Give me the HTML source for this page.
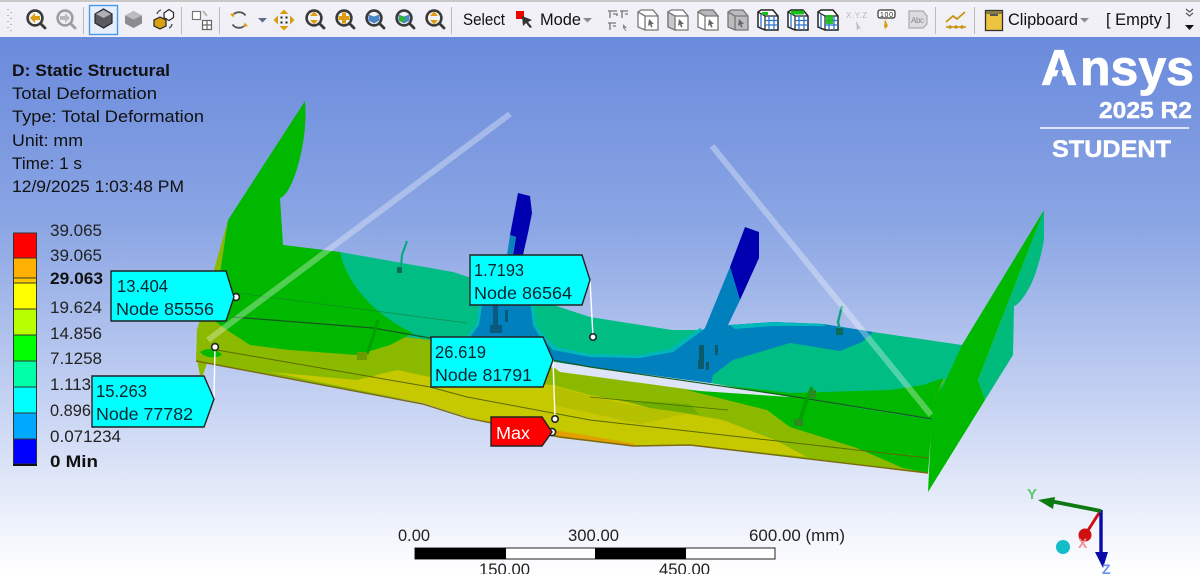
<!DOCTYPE html>
<html><head><meta charset="utf-8"><style>
html,body{margin:0;padding:0;width:1200px;height:574px;overflow:hidden;background:#fff}
svg{display:block;filter:blur(.35px)}
text{font-family:"Liberation Sans",sans-serif}
</style></head><body>
<svg width="1200" height="574" viewBox="0 0 1200 574" xmlns="http://www.w3.org/2000/svg">
<defs>
<linearGradient id="bg" gradientUnits="userSpaceOnUse" x1="0" y1="37" x2="0" y2="574">
<stop offset="0" stop-color="#6a8adc"/><stop offset=".35" stop-color="#8ba6e4"/><stop offset=".65" stop-color="#c0cef1"/><stop offset="1" stop-color="#ffffff"/></linearGradient>
<linearGradient id="tb" x1="0" y1="0" x2="0" y2="1"><stop offset="0" stop-color="#f2f2f8"/><stop offset="1" stop-color="#eeeef4"/></linearGradient>
<g id="mag"><circle cx="0" cy="0" r="7.4" fill="#f4f4f4" stroke="#3a3a3a" stroke-width="2.6"/><path d="M5.500 5.500L10 10" stroke="#3a3a3a" stroke-width="2.8" stroke-linecap="round"/></g>
<g id="cur"><path d="M1-1L6 4L3.500 4L4.500 7L3 7.500L2 4.500L0 6Z" fill="#666"/></g>
<g id="grid"><path d="M-7-10H5L10-4V10H-3L-10 7V-8Z" fill="#fff" stroke="#222" stroke-width="1.500"/><path d="M-3-4V10M-3-4H10M-3-4L-10-8" fill="none" stroke="#222" stroke-width="1.200"/><path d="M1-4V10M6-4V10M-3 0.500H10M-3 5H10M-7-6V8" fill="none" stroke="#2a74d0" stroke-width="1.300"/></g>
</defs>

<rect x="0" y="37" width="1200" height="537" fill="url(#bg)"/>

<!-- base lime: fin strip + lower plate -->
<path d="M228,220L197,330L196,361L423,403L467,417L560,437L633,446L690,445L928,473L932,420L790,397L590,376L430,340L216,300Z" fill="#8ab900"/>
<polygon points="197,360 207,363 203,375 200,375" fill="#8ab900"/>

<!-- right fin back -->
<path d="M1044,210L1044,240C1040,262 1034,280 1028,290C1022,300 1018,305 1014,306L1013,355L985,400L978,380Z" fill="#00bb7c"/>

<!-- upper plate teal -->
<path d="M283,245L340,252L453,272L590,317L672,330L703,330L730,325L773,322L823,324L873,332L962,345L932,420L790,397L710,383L590,368L430,340L267,320Z" fill="#00bd84"/>

<!-- main green: fin + left of plate -->
<path d="M305,101C307,125 303,150 296,172C291,187 285,197 280,198L283,245L340,252C347,285 375,315 413,333L390,345L357,355L290,350L250,345L227,330L213,320L228,220Z" fill="#00b800"/>
<path d="M200,352C207,347 218,349 222,355C215,359 205,358 200,352Z" fill="#00b800"/>

<!-- right green strip of upper plate -->
<path d="M713,384L790,393L890,390L923,385L943,378L935,420L790,397Z" fill="#00b800"/>
<polygon points="880,412 932,420 932,427 900,420" fill="#00c0a0"/>

<!-- blue zones -->
<path d="M466,337L476,325L480,300L533,300L536,325L543,335L556,347L590,354L640,355L670,349L700,328L703,330L676,352L640,358L590,357L553,350L540,337L533,325L530,300L483,300L479,325L470,337Z" fill="#00b8bc"/>
<path d="M470,337L479,325L483,300L530,300L533,325L540,337L553,350L590,357L640,358L673,352L703,330L730,325L773,322L823,324L873,332L862,342L840,351L790,343L733,360L713,375L711,384L590,368L500,351Z" fill="#0080bd"/>
<path d="M730,325L773,322L823,324L826,326L773,326L735,329Z" fill="#00b8bc"/>

<!-- lower plate zones -->
<path d="M687,390L767,410L790,427L857,448L903,468L928,473L932,420L790,397Z" fill="#00b800"/>
<path d="M270,372L357,380L397,370L430,377L553,385L590,395L683,413L723,420L775,440L807,457L690,445L633,446L560,437L490,423L467,417L423,403Z" fill="#c6c800"/>
<path d="M553,386L590,396L630,405L690,413L640,424L600,415L553,405Z" fill="#aebc00" opacity=".7"/>
<path d="M480,420L560,431L590,436L636,444L632,446L560,438Z" fill="#e2a000"/>
<path d="M620,400L690,404L700,415L650,408Z" fill="#6fae00"/>
<!-- gap -->
<polygon points="545,361 590,367 710,383 790,397 700,391 590,376 560,372" fill="#dfe5f8"/>

<!-- plate lines -->
<path d="M233,317L373,328L430,338L590,367L790,396L932,419" fill="none" stroke="#145a20" stroke-width="1.200"/>
<path d="M237,293L467,323" fill="none" stroke="#1a7a30" stroke-width=".7" opacity=".7"/>
<path d="M217,350L430,387L467,397L590,420L928,458" fill="none" stroke="#5a6a00" stroke-width="1"/>
<path d="M590,397L728,410" fill="none" stroke="#4a6a00" stroke-width=".8"/>
<path d="M196,361L423,404L467,418L560,437L633,446L690,445L928,473" fill="none" stroke="#7a6a10" stroke-width="1.400"/>

<!-- struts -->
<polygon points="518,193 530,196 532,213 528,233 523,255 513,255 516,237 510,235" fill="#0000b0"/>
<polygon points="507,255 510,235 516,237 513,255" fill="#0a84bd"/>
<polygon points="745,227 759,232 759,258 740,300 730,267" fill="#0000b0"/>
<polygon points="730,267 740,300 728,325 715,345 700,360 680,352 705,328" fill="#0080bd"/>
<path d="M699,345h5v15h-5zM698,360h6v9h-6zM715,345h3v10h-3zM706,362h3v8h-3z" fill="#0a5a6a"/>
<path d="M493,305h5v25h-5zM505,310h3v12h-3zM490,325h12v8h-12z" fill="#0a5a80"/>
<!-- small brackets -->
<path d="M407,241L402,255L401,266" fill="none" stroke="#00a878" stroke-width="2"/>
<rect x="397" y="267" width="5" height="6" fill="#0b6a5a"/>
<path d="M842,306L838,322L840,330" fill="none" stroke="#10a080" stroke-width="2.400"/>
<rect x="836" y="328" width="7" height="7" fill="#0b6a5a"/>
<path d="M378,320L372,340L367,354" fill="none" stroke="#00a000" stroke-width="3"/>
<rect x="357" y="352" width="10" height="8" fill="#6a9a00"/>
<path d="M812,387L805,405L800,420" fill="none" stroke="#00a000" stroke-width="3.500"/>
<rect x="794" y="419" width="9" height="7" fill="#2a8a20"/>
<rect x="809" y="390" width="7" height="8" fill="#2a8a20"/>

<!-- right fin front -->
<polygon points="1044,210 962,345 932,410 928,492 985,400 978,380" fill="#00b800"/>
<path d="M932,405L942,382L946,378L936,395Z" fill="#8cb000"/>

<!-- beams -->
<line x1="510" y1="114" x2="208" y2="340" stroke="#fff" stroke-width="6" opacity=".32"/>
<line x1="712" y1="146" x2="931" y2="415" stroke="#fff" stroke-width="6" opacity=".32"/>

<!-- probes -->
<path d="M215,347L214,399M593,337L590,280M555,419L553,360" stroke="#fff" stroke-width="1.400" fill="none"/>
<g fill="#fff" stroke="#222" stroke-width="1.600">
<circle cx="236" cy="297" r="3.400"/><circle cx="215" cy="347" r="3.400"/><circle cx="593" cy="337" r="3.200"/><circle cx="555" cy="419" r="3.200"/><circle cx="552" cy="432" r="3.600"/></g>

<!-- callouts -->
<g stroke="#222" stroke-width="1.400" fill="#00ffff">
<polygon points="111,271 226,271 234,297 226,321 111,321"/>
<polygon points="92,376 204,376 214,399 204,427 92,427"/>
<polygon points="470,255 582,255 590,280 582,305 470,305"/>
<polygon points="431,337 543,337 553,360 543,387 431,387"/>
<polygon points="491,417 542,417 552,432 542,446 491,446" fill="#ff0000"/>
</g>
<g font-size="17.5" fill="#0b2530">
<text x="117" y="292" textLength="51" lengthAdjust="spacingAndGlyphs">13.404</text><text x="116" y="315" textLength="98" lengthAdjust="spacingAndGlyphs">Node 85556</text>
<text x="96" y="397" textLength="51" lengthAdjust="spacingAndGlyphs">15.263</text><text x="96" y="420" textLength="97" lengthAdjust="spacingAndGlyphs">Node 77782</text>
<text x="474" y="276" textLength="50" lengthAdjust="spacingAndGlyphs">1.7193</text><text x="474" y="299" textLength="98" lengthAdjust="spacingAndGlyphs">Node 86564</text>
<text x="435" y="358" textLength="51" lengthAdjust="spacingAndGlyphs">26.619</text><text x="435" y="381" textLength="97" lengthAdjust="spacingAndGlyphs">Node 81791</text>
</g>
<text x="496" y="439" font-size="17.500" fill="#fff" textLength="34" lengthAdjust="spacingAndGlyphs">Max</text>

<!-- info text -->
<g font-size="17" fill="#111">
<text x="12" y="76" font-weight="bold" textLength="158" lengthAdjust="spacingAndGlyphs">D: Static Structural</text>
<text x="12" y="99" textLength="145" lengthAdjust="spacingAndGlyphs">Total Deformation</text>
<text x="12" y="122" textLength="192" lengthAdjust="spacingAndGlyphs">Type: Total Deformation</text>
<text x="12" y="146" textLength="71" lengthAdjust="spacingAndGlyphs">Unit: mm</text>
<text x="12" y="169" textLength="70" lengthAdjust="spacingAndGlyphs">Time: 1 s</text>
<text x="12" y="192" textLength="172" lengthAdjust="spacingAndGlyphs">12/9/2025 1:03:48 PM</text>
</g>

<!-- legend -->
<g stroke="#333" stroke-width="1">
<rect x="13.500" y="233" width="23" height="25" fill="#ff0000"/>
<rect x="13.500" y="258" width="23" height="20" fill="#ffb000"/>
<rect x="13.500" y="278" width="23" height="5" fill="#ffc800"/>
<rect x="13.500" y="283" width="23" height="26" fill="#ffff00"/>
<rect x="13.500" y="309" width="23" height="26" fill="#b8ff00"/>
<rect x="13.500" y="335" width="23" height="26" fill="#00ff00"/>
<rect x="13.500" y="361" width="23" height="26" fill="#00ffa8"/>
<rect x="13.500" y="387" width="23" height="26" fill="#00ffff"/>
<rect x="13.500" y="413" width="23" height="26" fill="#00a8ff"/>
<rect x="13.500" y="439" width="23" height="25" fill="#0000ff"/>
</g>
<rect x="13" y="464" width="24" height="2" fill="#111"/>
<g font-size="17" fill="#222">
<text x="50" y="236" textLength="52" lengthAdjust="spacingAndGlyphs">39.065</text>
<text x="50" y="261" textLength="52" lengthAdjust="spacingAndGlyphs">39.065</text>
<text x="50" y="284" font-weight="bold" fill="#111" textLength="53" lengthAdjust="spacingAndGlyphs">29.063</text>
<text x="50" y="313" textLength="52" lengthAdjust="spacingAndGlyphs">19.624</text>
<text x="50" y="339" textLength="52" lengthAdjust="spacingAndGlyphs">14.856</text>
<text x="50" y="364" textLength="52" lengthAdjust="spacingAndGlyphs">7.1258</text>
<text x="50" y="390" textLength="41" lengthAdjust="spacingAndGlyphs">1.113</text>
<text x="50" y="416" textLength="41" lengthAdjust="spacingAndGlyphs">0.896</text>
<text x="50" y="442" textLength="71" lengthAdjust="spacingAndGlyphs">0.071234</text>
<text x="50" y="467" font-weight="bold" fill="#111" textLength="48" lengthAdjust="spacingAndGlyphs">0 Min</text>
</g>

<!-- logo -->
<text y="85" font-size="50" font-weight="bold" fill="#fff" stroke="#fff" stroke-width=".8"><tspan x="1041">A</tspan><tspan x="1080">nsys</tspan></text>
<polygon points="1060,66 1053,87 1066,87" fill="url(#bg)"/>
<text x="1099" y="118" font-size="23" font-weight="bold" fill="#fff" stroke="#fff" stroke-width=".4" textLength="93" lengthAdjust="spacingAndGlyphs">2025 R2</text>
<rect x="1040" y="127" width="149" height="2" fill="#dfe6fa"/>
<text x="1052" y="157" font-size="24" font-weight="bold" fill="#fff" stroke="#fff" stroke-width=".4" textLength="119" lengthAdjust="spacingAndGlyphs">STUDENT</text>

<!-- scale -->
<g font-size="17" fill="#222">
<text x="398" y="541" textLength="32" lengthAdjust="spacingAndGlyphs">0.00</text>
<text x="568" y="541" textLength="51" lengthAdjust="spacingAndGlyphs">300.00</text>
<text x="749" y="541" textLength="96" lengthAdjust="spacingAndGlyphs">600.00 (mm)</text>
<text x="479" y="575" textLength="51" lengthAdjust="spacingAndGlyphs">150.00</text>
<text x="659" y="575" textLength="51" lengthAdjust="spacingAndGlyphs">450.00</text>
</g>
<rect x="415" y="548" width="360" height="11" fill="#fff" stroke="#222" stroke-width="1"/>
<rect x="415" y="548" width="91" height="11" fill="#000"/><rect x="595" y="548" width="91" height="11" fill="#000"/>

<!-- triad -->
<line x1="1101" y1="510" x2="1085" y2="535" stroke="#d01010" stroke-width="3"/>
<circle cx="1085" cy="535" r="6.500" fill="#d01010"/>
<line x1="1101" y1="510" x2="1101" y2="555" stroke="#0a0aa8" stroke-width="3.400"/>
<polygon points="1095,552 1108,552 1103,568" fill="#0a0aa8"/>
<line x1="1101" y1="511" x2="1050" y2="501" stroke="#0c7a10" stroke-width="3.800"/>
<polygon points="1038,500 1055,497 1053,509" fill="#0c7a10"/>
<circle cx="1063" cy="547" r="7" fill="#12bcc8"/>
<text x="1027" y="499" font-size="15" font-weight="bold" fill="#5cc870">Y</text>
<text x="1078" y="548" font-size="14" font-weight="bold" fill="#f09090">X</text>
<text x="1102" y="574" font-size="14" font-weight="bold" fill="#6a90f0">Z</text>

<!-- toolbar -->
<rect x="0" y="0" width="1200" height="37" fill="url(#tb)"/>
<rect x="0" y="0" width="1200" height="2" fill="#c8c8c8"/>
<path d="M8 9v1M11 12v1M8 15v1M11 18v1M8 21v1M11 24v1M8 27v1M11 30v1" stroke="#aaa" stroke-width="1.600"/>
<g fill="#b9b9be">
<rect x="83" y="7" width="1" height="27"/><rect x="181" y="7" width="1" height="27"/><rect x="219" y="7" width="1" height="27"/><rect x="451" y="7" width="1" height="27"/><rect x="935" y="7" width="1" height="27"/><rect x="974" y="7" width="1" height="27"/>
</g>
<!-- magnifiers -->
<use href="#mag" x="35" y="18"/><path d="M30 18l5-5v3h5v4h-5v3z" fill="#dc9c10"/>
<g opacity=".45"><use href="#mag" x="65" y="18"/><path d="M70 18l-5-5v3h-5v4h5v3z" fill="#777"/></g>
<use href="#mag" x="314" y="18"/><path d="M314 11.500l4 4.500h-8zM314 24.500l4-4.500h-8z" fill="#dc9c10"/>
<use href="#mag" x="344" y="18"/><path d="M342 12.500h4v3.500h3.500v4h-3.500v3.500h-4v-3.500h-3.500v-4h3.500z" fill="#dc9c10"/>
<use href="#mag" x="374" y="18"/><path d="M368.500 14.500l5.500 2 5.500-2v6l-5.500 3-5.500-3z" fill="#4a86c8"/>
<use href="#mag" x="404" y="18"/><path d="M398.500 14.500l5.500 2 5.500-2v6l-5.500 3-5.500-3z" fill="#4a86c8"/><circle cx="402" cy="19" r="3" fill="#28b828"/>
<use href="#mag" x="434" y="18"/><path d="M434 11.500l4 4.500h-8zM434 24.500l4-4.500h-8z" fill="#dc9c10"/>
<!-- selected box + cubes -->
<rect x="89.500" y="5.500" width="28" height="29" fill="#e6eefb" stroke="#4a98e8" stroke-width="1.400"/>
<path d="M95 14l8.500-5 8.500 5v9l-8.500 5-8.500-5z" fill="#58585e" stroke="#2a2a2a" stroke-width="1.200"/><path d="M96 14l7.500 4 7.500-4-7.500-4z" fill="#b0b0b6"/>
<path d="M125 15.500l8.500-4.500 8.500 4.500v8l-8.500 4.500-8.500-4.500z" fill="#8c8c90"/><path d="M125 15.500l8.500 4 8.500-4-8.500-4.500z" fill="#bcbcc0"/>
<path d="M154 20l6-3 6 3v6l-6 3-6-3z" fill="#d8a010" stroke="#222" stroke-width="1.200"/>
<path d="M164 13l5-3.500 4.500 3v5l-4.500 3-5-3z" fill="#fff" stroke="#333" stroke-width="1.300"/><path d="M157 14a6 6 0 0 1 4-4M172 24a5 5 0 0 1-3 4" fill="none" stroke="#555" stroke-width="1.400"/>
<!-- views -->
<rect x="192.500" y="11.500" width="8" height="8" fill="#fff" stroke="#777" stroke-width="1.200"/>
<path d="M202.500 20.500h9v9h-9zM207 20.500v9M202.500 25h9" fill="#fff" stroke="#666" stroke-width="1.200"/>
<path d="M203 11l4 5" stroke="#aaa" stroke-width="1.500"/>
<!-- rotate -->
<path d="M232.500 15.500a8 8 0 0 1 13 0M245.500 24.500a8 8 0 0 1-13 0" fill="none" stroke="#555" stroke-width="1.800"/>
<path d="M230 14l4.500-1-1 4.500zM248 26l-4.500 1 1-4.500z" fill="#dc9c10"/>
<path d="M258 18h9l-4.500 4.500z" fill="#5a6a8a"/>
<!-- pan -->
<path d="M284 9.500l4.500 4.500h-9zM284 30.500l4.500-4.500h-9zM273.500 20l4.500-4.500v9zM294.500 20l-4.500-4.500v9z" fill="#dc9c10"/><path d="M280.500 16.500h2v2h-2zM285.500 16.500h2v2h-2zM280.500 21.500h2v2h-2zM285.500 21.500h2v2h-2z" fill="#222"/>
<!-- select -->
<text x="463" y="25" font-size="17" fill="#111" textLength="42" lengthAdjust="spacingAndGlyphs">Select</text>
<rect x="516" y="11" width="8" height="8" fill="#f00000"/>
<path d="M522 16l10 4-4 2 4 5-2 1-4-5-3 3z" fill="#333"/>
<text x="540" y="25" font-size="17" fill="#111" textLength="41" lengthAdjust="spacingAndGlyphs">Mode</text>
<path d="M583 18h9l-4.500 4.500z" fill="#8a8a90"/>
<!-- select-type icons -->
<g fill="none" stroke="#777" stroke-width="1.300">
<path d="M608 11h9M610 11v7M613 14h4v2M620 11h8M622 11v7M625 14h3M608 23h8M610 23v7M613 26h3"/>
</g>
<path d="M623 24l4 4-2 0 1 3-1 0-1-3-1 1z" fill="#888"/>
<!-- face cubes -->
<g stroke="#777" stroke-width="1.300">
<g transform="translate(648 20)"><path d="M-7-10H5L10-4V10H-3L-10 7V-8Z" fill="#fff"/><path d="M-3-4V10M-3-4H10M-3-4L-10-8" fill="none"/></g>
<g transform="translate(678 20)"><path d="M-7-10H5L10-4V10H-3L-10 7V-8Z" fill="#fff"/><path d="M-3-4L-10-8V7L-3 10Z" fill="#c8c8cc"/><path d="M-3-4H10" fill="none"/></g>
<g transform="translate(708 20)"><path d="M-7-10H5L10-4V10H-3L-10 7V-8Z" fill="#fff"/><path d="M-10-8L-7-10H5L10-4H-3Z" fill="#b8b8bc"/><path d="M-3-4V10" fill="none"/></g>
<g transform="translate(738 20)"><path d="M-7-10H5L10-4V10H-3L-10 7V-8Z" fill="#bcbcc0"/><path d="M-3-4V10M-3-4H10M-3-4L-10-8" fill="none"/></g>
</g>
<use href="#cur" x="648" y="20"/><use href="#cur" x="678" y="20"/><use href="#cur" x="708" y="20"/><use href="#cur" x="738" y="20"/>
<!-- grid cubes -->
<use href="#grid" x="768" y="20"/><rect x="762" y="12" width="6" height="3" fill="#14c014"/>
<use href="#grid" x="798" y="20"/><rect x="791" y="10.500" width="13" height="4" fill="#14c014"/>
<use href="#grid" x="828" y="20"/><rect x="826" y="15" width="7" height="9" fill="#14c014" opacity=".9"/>
<text x="846" y="18" font-size="8" fill="#b8b8bc" textLength="21">X.Y.Z</text>
<path d="M856 21l5 8-2-1-2 3z" fill="#c0c0c4"/>
<rect x="878" y="10" width="17" height="8" rx="2" fill="#fff" stroke="#333" stroke-width="1.200"/>
<text x="880" y="17" font-size="7" fill="#222" textLength="13">100</text>
<path d="M885 19l3 7-3 3-1-3z" fill="#d8a010"/>
<path d="M909 11h14l4 5v8l-4 4h-14z" fill="#dcdce0" stroke="#aaa" stroke-width="1.200"/>
<text x="911" y="23" font-size="8" fill="#888" textLength="13">Abc</text>
<path d="M946 22l7-6 4 3 8-7" fill="none" stroke="#c89410" stroke-width="1.800"/>
<path d="M946 27h20" fill="none" stroke="#c89410" stroke-width="1.400"/>
<circle cx="950" cy="27" r="1.700" fill="#c89410"/><circle cx="956" cy="27" r="1.700" fill="#c89410"/><circle cx="962" cy="27" r="1.700" fill="#c89410"/>
<!-- clipboard -->
<rect x="985.500" y="10.500" width="17" height="20" fill="#edc440" stroke="#333" stroke-width="1.300"/>
<rect x="986" y="11" width="16" height="3" fill="#8a7a40"/>
<rect x="990" y="14" width="8" height="2" fill="#555"/>
<text x="1008" y="25" font-size="17" fill="#111" textLength="70" lengthAdjust="spacingAndGlyphs">Clipboard</text>
<path d="M1080 18h9l-4.500 4.500z" fill="#8a8a90"/>
<text x="1106" y="25" font-size="17" fill="#111" textLength="65" lengthAdjust="spacingAndGlyphs">[ Empty ]</text>
<path d="M1186 9l3.500 3 3.500-3M1186 13l3.500 3 3.500-3" fill="none" stroke="#555" stroke-width="1.200"/>
<path d="M1185 25h9l-4.500 5z" fill="#111"/>
</svg>
</body></html>
